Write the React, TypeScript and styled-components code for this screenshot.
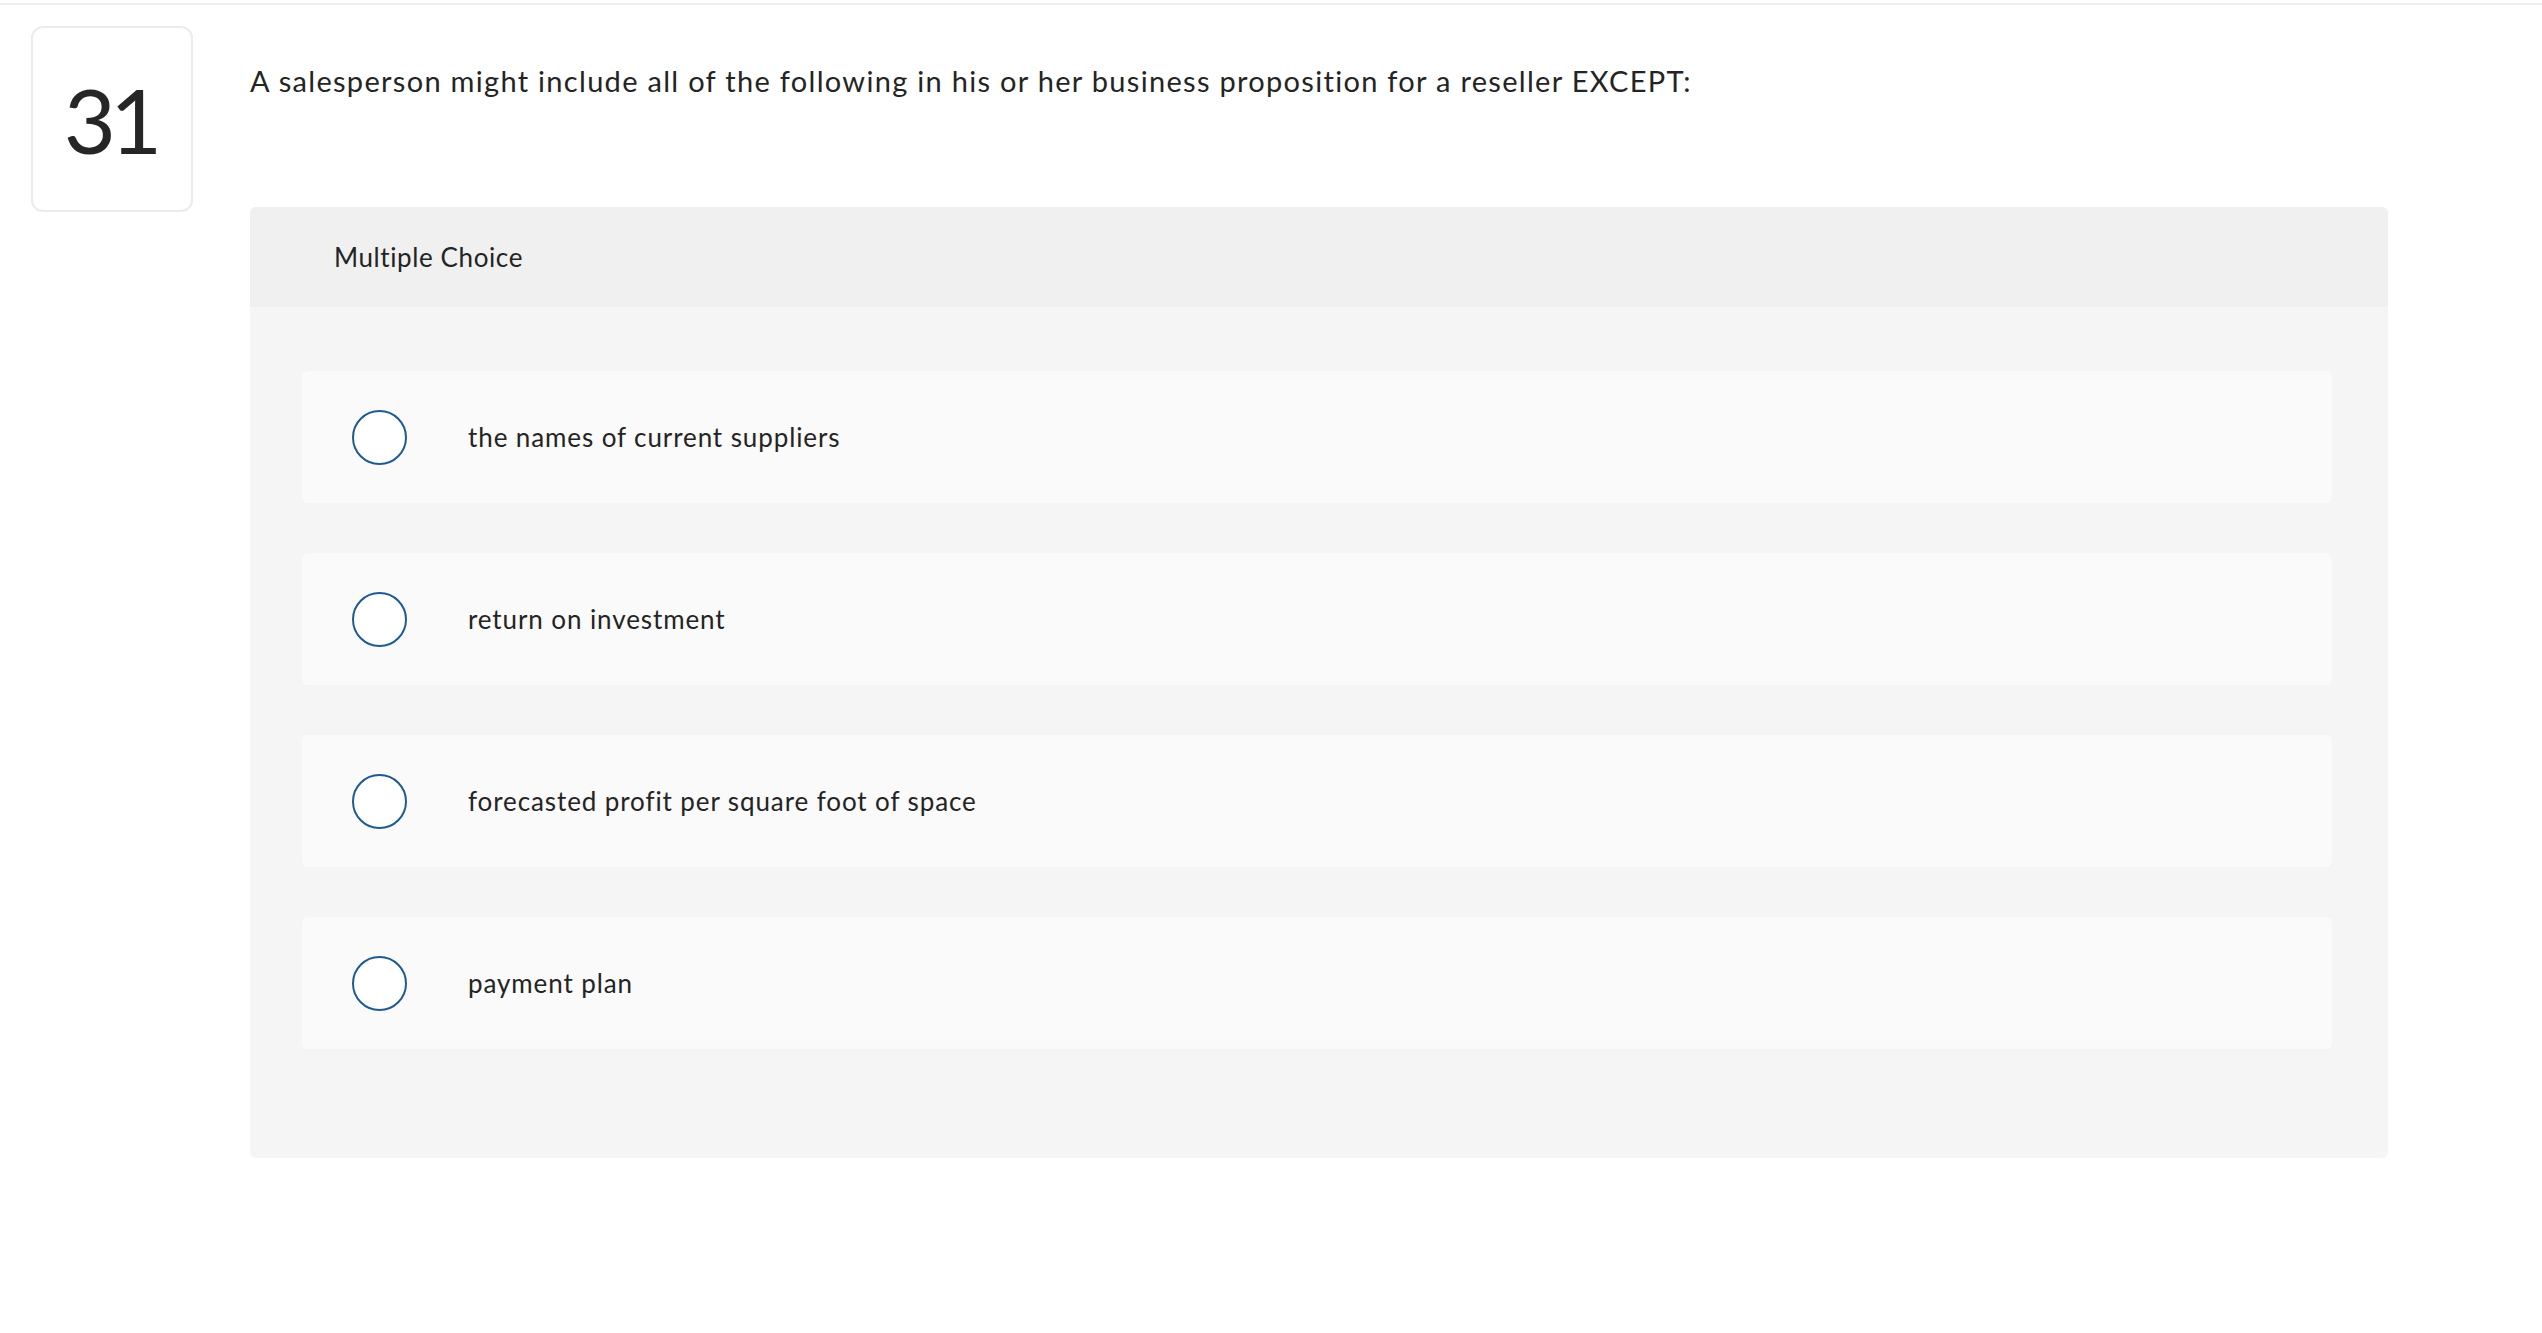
import styled, { createGlobalStyle } from 'styled-components'

const GlobalStyle = createGlobalStyle`
  html, body {
    margin: 0;
    padding: 0;
    background: #ffffff;
  }
  body {
    font-family: Lato, "Liberation Sans", Arial, sans-serif;
    color: #242424;
  }
`

const Page = styled.div`
  min-height: 100vh;
  background: #ffffff;
`

const TopRule = styled.div`
  height: 2px;
  margin-top: 3px;
  background: #eeeeee;
`

const QuestionRow = styled.div`
  display: flex;
  align-items: flex-start;
  gap: 57px;
  padding: 21px 154px 0 31px;
`

const NumberBox = styled.div`
  flex: 0 0 auto;
  width: 162px;
  height: 186px;
  box-sizing: border-box;
  border: 2px solid #ececec;
  border-radius: 12px;
  display: flex;
  align-items: center;
  justify-content: center;
  font-size: 90px;
  font-weight: 400;
  color: #262626;
  letter-spacing: -6px;
  padding-right: 4px;
`

const QuestionBody = styled.div`
  flex: 1;
  display: flex;
  flex-direction: column;
`

const Prompt = styled.p`
  margin: 37px 0 0;
  font-size: 29px;
  line-height: 36px;
  letter-spacing: 1.3px;
  color: #242424;
`

const ChoicePanel = styled.section`
  margin-top: 108px;
  border-radius: 6px;
  overflow: hidden;
  background: #f5f5f5;
`

const PanelHeader = styled.div`
  height: 100px;
  display: flex;
  align-items: center;
  padding-left: 84px;
  background: #f0f0f0;
  font-size: 26px;
  letter-spacing: 0.6px;
  color: #242424;
`

const OptionList = styled.div`
  display: flex;
  flex-direction: column;
  gap: 50px;
  padding: 64px 56px 109px 52px;
`

const Option = styled.label`
  height: 132px;
  display: flex;
  align-items: center;
  padding-left: 50px;
  background: #fafafa;
  border-radius: 6px;
  cursor: pointer;
`

const Radio = styled.span`
  flex: 0 0 auto;
  width: 55px;
  height: 55px;
  box-sizing: border-box;
  border: 2px solid #1f5a94;
  border-radius: 50%;
  background: #ffffff;
`

const OptionText = styled.span`
  margin-left: 61px;
  font-size: 26px;
  letter-spacing: 0.9px;
  color: #242424;
`

const options = [
  'the names of current suppliers',
  'return on investment',
  'forecasted profit per square foot of space',
  'payment plan',
]

const App = () => {
  return (
    <Page>
      <GlobalStyle />
      <TopRule />
      <QuestionRow>
        <NumberBox>31</NumberBox>
        <QuestionBody>
          <Prompt>
            A salesperson might include all of the following in his or her business proposition for a reseller EXCEPT:
          </Prompt>
          <ChoicePanel>
            <PanelHeader>Multiple Choice</PanelHeader>
            <OptionList>
              {options.map((text) => (
                <Option key={text}>
                  <Radio />
                  <OptionText>{text}</OptionText>
                </Option>
              ))}
            </OptionList>
          </ChoicePanel>
        </QuestionBody>
      </QuestionRow>
    </Page>
  )
}

export default App
